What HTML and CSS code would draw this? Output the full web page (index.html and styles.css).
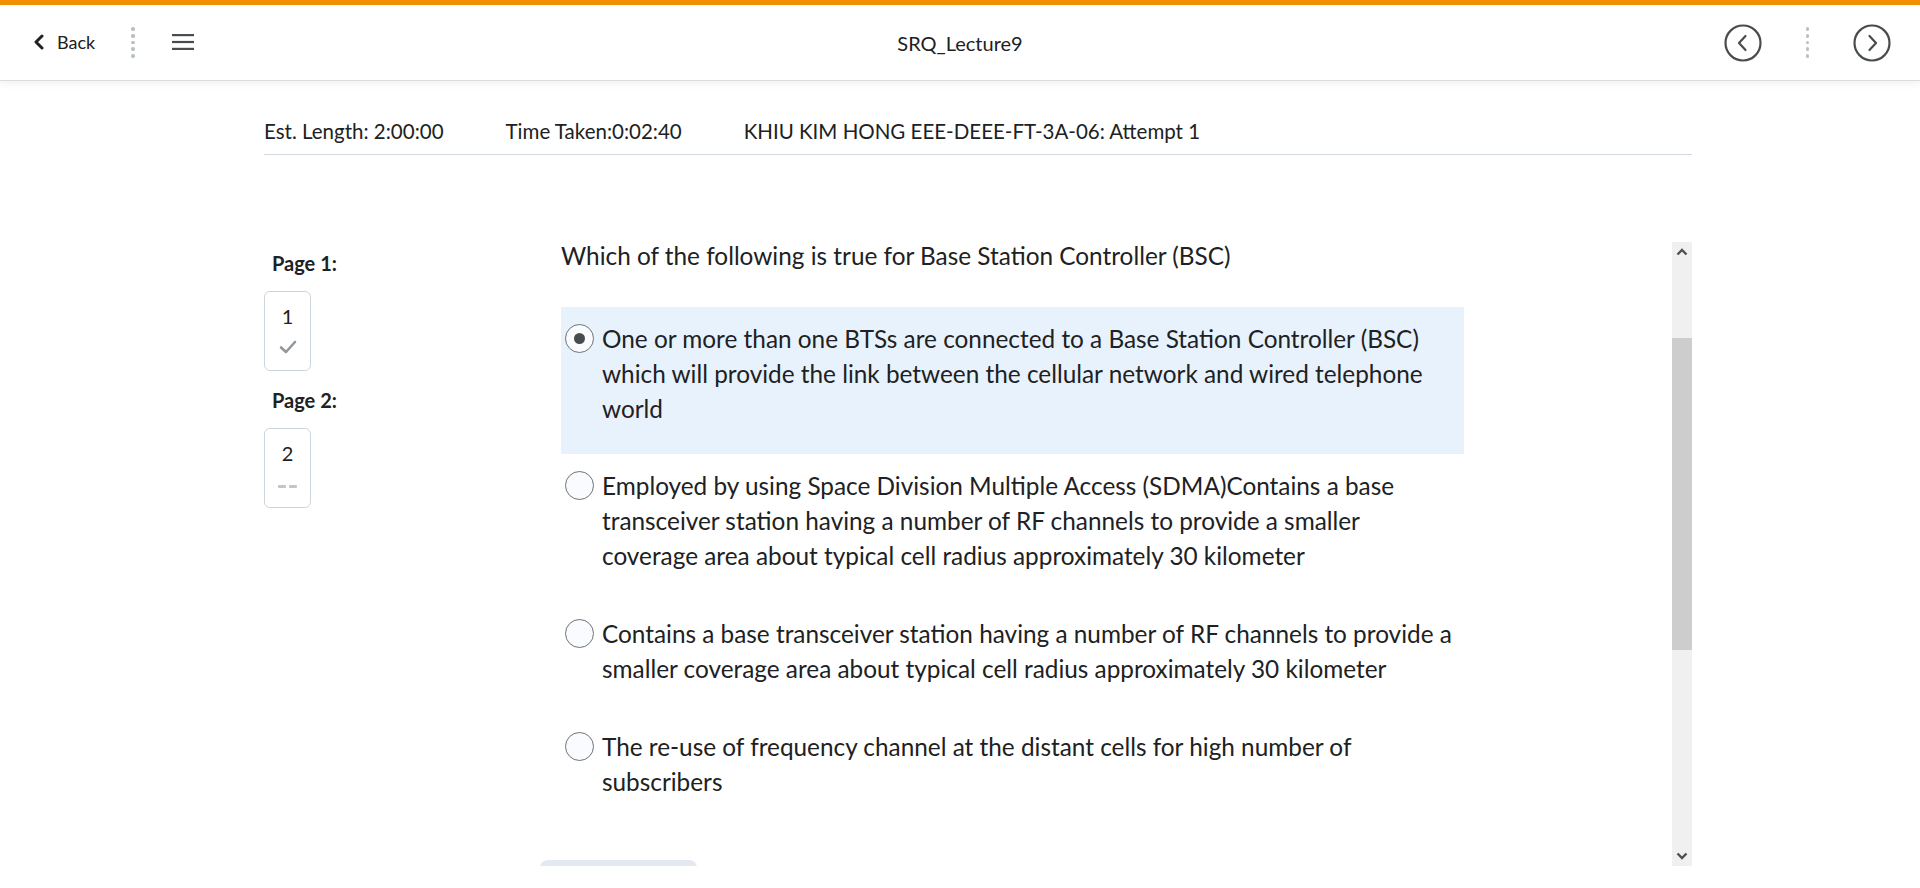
FILE: index.html
```html
<!DOCTYPE html>
<html>
<head>
<meta charset="utf-8">
<link rel="stylesheet" href="styles.css">
</head>
<body>
<header class="topbar">
  <div class="bar-left">
    <a class="back"><svg class="back-chev" width="12" height="16" viewBox="0 0 12 16"><path d="M9 2 L3 8 L9 14" fill="none" stroke="#202122" stroke-width="3" stroke-linecap="round" stroke-linejoin="round"/></svg><span>Back</span></a>
    <span class="dots"><i></i><i></i><i></i><i></i><i></i></span>
    <svg class="menu" width="22" height="16" viewBox="0 0 22 16"><rect x="0" y="0" width="22" height="2.2" fill="#494c4e"/><rect x="0" y="6.9" width="22" height="2.2" fill="#494c4e"/><rect x="0" y="13.8" width="22" height="2.2" fill="#494c4e"/></svg>
  </div>
  <div class="title">SRQ_Lecture9</div>
  <div class="bar-right">
    <svg class="circ" width="38" height="38" viewBox="0 0 38 38"><circle cx="19" cy="19" r="17.5" fill="none" stroke="#494c4e" stroke-width="2.2"/><path d="M21.5 12 L15 19 L21.5 26" fill="none" stroke="#494c4e" stroke-width="2.2" stroke-linecap="round" stroke-linejoin="round"/></svg>
    <span class="dots"><i></i><i></i><i></i><i></i><i></i></span>
    <svg class="circ" width="38" height="38" viewBox="0 0 38 38"><circle cx="19" cy="19" r="17.5" fill="none" stroke="#494c4e" stroke-width="2.2"/><path d="M16.5 12 L23 19 L16.5 26" fill="none" stroke="#494c4e" stroke-width="2.2" stroke-linecap="round" stroke-linejoin="round"/></svg>
  </div>
</header>
<main class="page">
  <div class="info">
    <span class="info-item">Est. Length: 2:00:00</span>
    <span class="info-item">Time Taken:0:02:40</span>
    <span class="info-item">KHIU KIM HONG EEE-DEEE-FT-3A-06: Attempt 1</span>
  </div>
  <div class="body">
    <nav class="pages">
      <div class="page-label">Page 1:</div>
      <div class="page-box">
        <span class="num">1</span>
        <svg class="check" width="18" height="14" viewBox="0 0 18 14"><path d="M2 7.5 L7 12 L16 2" fill="none" stroke="#90989d" stroke-width="2.6" stroke-linecap="round" stroke-linejoin="round"/></svg>
      </div>
      <div class="page-label">Page 2:</div>
      <div class="page-box">
        <span class="num">2</span>
        <span class="dash"><i></i><i></i></span>
      </div>
    </nav>
    <section class="content">
      <div class="scroll">
        <div class="question">Which of the following is true for Base Station Controller (BSC)</div>
        <div class="options">
          <label class="option selected"><span class="radio checked"></span><span class="opt-text">One or more than one BTSs are connected to a Base Station Controller (BSC) which will provide the link between the cellular network and wired telephone world</span></label>
          <label class="option"><span class="radio"></span><span class="opt-text">Employed by using Space Division Multiple Access (SDMA)Contains a base transceiver station having a number of RF channels to provide a smaller coverage area about typical cell radius approximately 30 kilometer</span></label>
          <label class="option"><span class="radio"></span><span class="opt-text">Contains a base transceiver station having a number of RF channels to provide a smaller coverage area about typical cell radius approximately 30 kilometer</span></label>
          <label class="option"><span class="radio"></span><span class="opt-text">The re-use of frequency channel at the distant cells for high number of subscribers</span></label>
        </div>
        <div class="next-btn"></div>
      </div>
      <div class="scrollbar">
        <div class="sb-arrow"><svg width="12" height="8" viewBox="0 0 12 8"><path d="M1.5 6.5 L6 2 L10.5 6.5" fill="none" stroke="#505050" stroke-width="2.4"/></svg></div>
        <div class="sb-track"><div class="sb-thumb"></div></div>
        <div class="sb-arrow"><svg width="12" height="8" viewBox="0 0 12 8"><path d="M1.5 1.5 L6 6 L10.5 1.5" fill="none" stroke="#505050" stroke-width="2.4"/></svg></div>
      </div>
    </section>
  </div>
</main>
</body>
</html>
```
FILE: styles.css
```css
* { box-sizing: border-box; }
html, body { margin: 0; padding: 0; background: #fff; }
body {
  font-family: Lato, "Open Sans", sans-serif;
  color: #202122;
  width: 1920px;
  height: 888px;
  overflow: hidden;
}
.topbar {
  height: 80px;
  border-top: 5px solid #f18f01;
  background: #fff;
  display: flex;
  align-items: center;
  justify-content: space-between;
  box-shadow: 0 1px 0 #dcdcdc, 0 3px 8px rgba(0,0,0,0.07);
  position: relative;
  z-index: 2;
}
.bar-left { display: flex; align-items: center; padding-left: 33px; width: 400px; }
.back { display: flex; align-items: center; font-size: 18px; color: #202122; }
.back-chev { margin-right: 12px; }
.dots { display: flex; flex-direction: column; gap: 3.3px; margin: 0 0 0 36px; }
.dots i { display: block; width: 3.4px; height: 3.4px; border-radius: 50%; background: #b9c0c5; }
.menu { margin-left: 37px; }
.title { font-size: 20px; color: #202122; }
.bar-right { display: flex; align-items: center; justify-content: flex-end; width: 400px; padding-right: 29px; }
.bar-right .dots { margin: 0 44px 0 44px; }
.page { padding-left: 264px; width: 1692px; }
.info {
  display: flex;
  padding-top: 38px;
  padding-bottom: 10px;
  line-height: 26px;
  font-size: 20.5px;
  border-bottom: 1px solid #d3d9e0;
}
.info-item { margin-right: 62px; }
.body { display: flex; margin-top: 87px; }
.pages { width: 276px; padding-top: 9px; }
.page-label { font-weight: 700; font-size: 20px; line-height: 24px; padding-left: 8px; margin-bottom: 16px; }
.page-box {
  width: 47px; height: 80px;
  border: 1px solid #cdd5dc; border-radius: 6px;
  display: flex; flex-direction: column; align-items: center;
  padding-top: 12px;
  margin-bottom: 17px;
}
.num { font-size: 20px; line-height: 24px; }
.check { margin-top: 12px; }
.dash { display: flex; gap: 3px; margin-top: 20px; }
.dash i { display: block; width: 8px; height: 3px; border-radius: 1px; background: #c0c7cc; }
.content { display: flex; height: 624px; }
.scroll { width: 1132px; overflow: hidden; }
.question { font-size: 24.35px; line-height: 28px; padding-left: 21px; margin-bottom: 37px; }
.options { margin-left: 21px; width: 903px; }
.option {
  display: flex; align-items: flex-start;
  padding: 14px 8px 29px 4px;
  font-size: 24.35px; line-height: 35px;
}
.option.selected { background: #e8f2fc; padding-bottom: 28px; }
.radio {
  flex: none;
  width: 29px; height: 29px;
  border-radius: 50%;
  border: 1px solid #6e7376;
  background: #f9fbff;
  margin-top: 3px;
  margin-right: 8px;
  display: flex; align-items: center; justify-content: center;
}
.radio.checked::after { content: ""; width: 11px; height: 11px; border-radius: 50%; background: #494c4e; }
.next-btn { margin-top: 32px; width: 157px; height: 40px; border-radius: 8px; background: #e3e9f1; }
.scrollbar { width: 20px; background: #f0f0f0; display: flex; flex-direction: column; }
.sb-arrow { height: 20px; display: flex; align-items: center; justify-content: center; }
.sb-track { flex: 1; padding-top: 76px; }
.sb-thumb { height: 312px; background: #cdcdcd; }
```
